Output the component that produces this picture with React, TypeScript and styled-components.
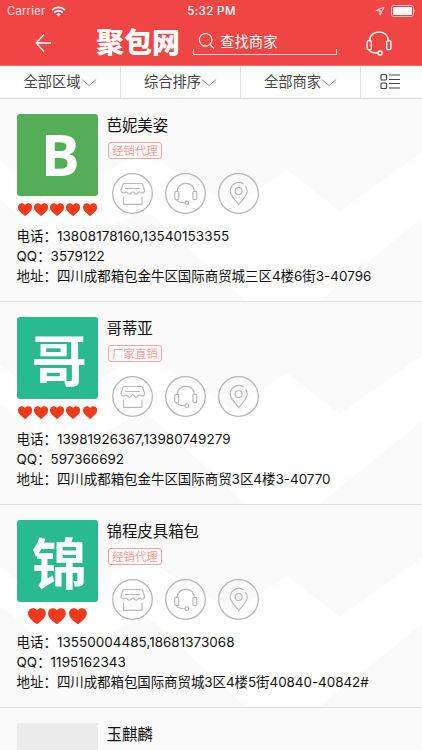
import React from "react";
import styled, { createGlobalStyle } from "styled-components";

const GlobalStyle = createGlobalStyle`
  * { box-sizing: border-box; }
  body {
    margin: 0;
    background: #fafafa;
    overflow: hidden;
    font-family: Inter, "Noto Sans CJK SC", sans-serif;
    color: #111;
  }
`;

const Screen = styled.div`
  width: 422px;
  height: 750px;
  overflow: hidden;
  display: flex;
  flex-direction: column;
`;

const Header = styled.header`
  height: 66px;
  flex: none;
  background: #f04545;
  color: #fff;
  border-bottom: 1px solid #f36c6c;
`;

const StatusBar = styled.div`
  height: 22px;
  display: grid;
  grid-template-columns: 1fr auto 1fr;
  align-items: center;
  padding: 0 6px 0 7px;
  font-size: 11.3px;
`;

const StatusSide = styled.div<{ $end?: boolean }>`
  display: flex;
  align-items: center;
  justify-content: ${(p) => (p.$end ? "flex-end" : "flex-start")};
  gap: 6px;
  color: #fde3e3;
  letter-spacing: 0.2px;
`;

const Clock = styled.div`
  font-weight: 500;
  font-size: 11.6px;
  letter-spacing: 0.35px;
`;

const NavBar = styled.div`
  height: 43px;
  display: flex;
  align-items: flex-start;
`;

const BackButton = styled.button`
  width: 96px;
  height: 43px;
  padding: 0 0 0 35px;
  border: 0;
  background: none;
  color: #fff;
  text-align: left;
  svg { display: block; }
`;

const Logo = styled.h1`
  margin: 0;
  width: 97px;
  font: 900 28px/39px "Noto Sans CJK SC", sans-serif;
`;

const SearchBox = styled.div`
  width: 144px;
  height: 25px;
  margin-top: 8px;
  display: flex;
  align-items: flex-start;
  gap: 5px;
  padding-left: 5px;
  font-size: 14.4px;
  line-height: 23px;
  background:
    linear-gradient(#ffdede, #ffdede) left bottom / 1px 6px no-repeat,
    linear-gradient(#ffdede, #ffdede) right bottom / 1px 6px no-repeat,
    linear-gradient(#ffdede, #ffdede) left bottom / 100% 1px no-repeat;
  svg { margin-top: 2px; }
`;

const SupportButton = styled.button`
  margin: 8px 0 0 28px;
  padding: 0;
  border: 0;
  background: none;
  color: #fff;
  svg { display: block; }
`;

const FilterBar = styled.nav`
  height: 33px;
  flex: none;
  display: grid;
  grid-template-columns: 121px 120px 120px 1fr;
  background: #fff;
  border-bottom: 1px solid #d5d5d5;
`;

const Filter = styled.button`
  display: flex;
  align-items: center;
  justify-content: center;
  padding: 0 0 2px;
  border: 0;
  border-right: 1px solid #e2e2e2;
  background: none;
  color: #444;
  font: 14.3px/20px "Noto Sans CJK SC", sans-serif;
  svg { margin-top: 2px; }
  &:last-child { border-right: 0; padding: 0 2px 3px 0; }
`;

const Card = styled.article`
  position: relative;
  isolation: isolate;
  height: 203px;
  flex: none;
  padding: 15.3px 17px 0 16.6px;
  border-bottom: 1px solid #dcdcdc;
  overflow: hidden;
`;

const Backdrop = styled.svg`
  position: absolute;
  inset: 0;
  z-index: -1;
`;

const Summary = styled.div`
  display: flex;
  height: 112px;
`;

const AvatarColumn = styled.div`
  width: 81.4px;
  flex: none;
`;

const Avatar = styled.div<{ $color: string; $latin?: boolean }>`
  height: 81.4px;
  border-radius: ${(p) => (p.$color === "#ebebeb" ? 0 : 3)}px;
  background: ${(p) => p.$color};
  color: #fff;
  display: flex;
  align-items: center;
  justify-content: center;
  padding: ${(p) => (p.$latin ? "0 0 3px 6px" : "0 0 1px 4px")};
  font: ${(p) =>
    p.$latin
      ? '700 58px/80px "Open Sans", sans-serif'
      : '700 55px/80px "Noto Sans CJK SC", sans-serif'};
`;

const Hearts = styled.div<{ $large: boolean }>`
  display: flex;
  justify-content: center;
  gap: ${(p) => (p.$large ? 2.6 : 2.1)}px;
  margin-top: ${(p) => (p.$large ? 6 : 7.5)}px;
  svg { display: block; }
`;

const Details = styled.div`
  padding-left: 8.6px;
`;

const Name = styled.h2`
  margin: -1px 0 0;
  font: 400 15.4px/22px "Noto Sans CJK SC", sans-serif;
  color: #111;
`;

const Tag = styled.span`
  display: block;
  width: 54px;
  height: 16.5px;
  margin: 7px 0 0 1.4px;
  border: 1px solid #f5a3a3;
  border-radius: 3px;
  color: #f5a0a0;
  font: 11.4px/14px "Noto Sans CJK SC", sans-serif;
  text-align: center;
`;

const Actions = styled.div`
  display: flex;
  gap: 12px;
  margin: 14.2px 0 0 5.8px;
`;

const RoundButton = styled.button`
  width: 41px;
  height: 41px;
  padding: 0;
  border: 0;
  background: none;
  color: #b8b8b8;
  svg { display: block; }
`;

const Contact = styled.dl`
  margin: 0;
  font-size: 13.45px;
  line-height: 20px;
  white-space: nowrap;
`;

const Row = styled.div`
  display: flex;
  dt, dd { margin: 0; }
`;

const Value = styled.dd<{ $spacing: number }>`
  letter-spacing: ${(p) => p.$spacing}px;
`;

function Wifi() {
  return (
    <svg width="15" height="11" viewBox="0 0 15 11" fill="none" stroke="#fff" strokeWidth="1.8">
      <path d="M1 4.1a9.3 9.3 0 0 1 13 0M3.3 6.5a6 6 0 0 1 8.4 0" />
      <path d="M5.2 8.2a3.4 3.4 0 0 1 4.6 0L7.5 10.6z" fill="#fff" stroke="none" />
    </svg>
  );
}

function Headset({ scale = 1, weight = 1.1 }: { scale?: number; weight?: number }) {
  return (
    <g
      transform={`scale(${scale})`}
      fill="none"
      stroke="currentColor"
      strokeWidth={weight / scale}
      strokeLinecap="round"
      strokeLinejoin="round"
    >
      <path d="M-8.8-2C-8.8-7.2-5-10.4 0-10.4S8.8-7.2 8.8-2" />
      <rect x="-11.2" y="-2.2" width="4" height="8.4" rx="1.3" />
      <rect x="7.2" y="-2.2" width="4" height="8.4" rx="1.3" />
      <path d="M-9.2 6.2C-9 8.7-6 9.4-1 9.4" />
      <circle cx="1" cy="9.4" r="1.9" />
    </g>
  );
}

type ActionKind = "shop" | "support" | "location";

function ActionIcon({ kind }: { kind: ActionKind }) {
  return (
    <svg width="41" height="41" viewBox="0 0 41 41" fill="none" stroke="currentColor" strokeWidth="1.15">
      <circle cx="20.5" cy="20.5" r="19.8" strokeWidth="1.3" />
      {kind === "shop" && (
        <g strokeLinecap="round" strokeLinejoin="round">
          <path d="M12 10.5h17.3q1 0 1.4 1l1.7 5.3c.5 1.8-.5 3.2-2.1 3.2-1.5 0-2-1-3-1-1.3 0-1.7 2.2-3.2 2.2s-1.9-2.2-3.4-2.2-1.9 2.2-3.4 2.2S15.4 19 14.1 19c-1 0-1.5 1-2.9 1-1.7 0-2.6-1.5-2-3.2l1.6-5.3q.4-1 1.2-1z" />
          <path d="M13.5 15.5h14M11.5 24v7.3H30V24" />
        </g>
      )}
      {kind === "support" && (
        <g transform="translate(20.8 20.5)">
          <Headset scale={0.98} weight={1.15} />
        </g>
      )}
      {kind === "location" && (
        <g strokeLinecap="round" strokeLinejoin="round">
          <path d="M25.2 10.7a8.6 8.6 0 0 0-13 7.6c0 4.2 5 8.7 8.6 13.4 3.5-4.700 8.400-9.200 8.400-13.400 0-1.900-.5-3.500-1.500-4.900" />
          <circle cx="20.6" cy="18" r="3.5" />
        </g>
      )}
    </svg>
  );
}

function Heart({ size }: { size: number }) {
  return (
    <svg width={size} height={size * 0.93} viewBox="0 0 28 26" fill="#ef3a1c">
      <path d="M14 3.6C11.7.7 8.9 0 6.9.4 3 .9 0 4 0 8.2c0 5.6 4.1 9.2 8 12.5 2.2 1.9 4.4 3.4 6 5.3 1.6-1.9 3.8-3.4 6-5.3 3.9-3.3 8-6.9 8-12.5C28 4 25 .9 21.1.4 19.1 0 16.3.7 14 3.6z" />
    </svg>
  );
}

const Chevron = () => (
  <svg width="16" height="9" viewBox="0 0 16 9" fill="none" stroke="#888" strokeWidth="0.9">
    <path d="M.8 1.5 8 7.6l7.2-6.1" />
  </svg>
);

interface Merchant {
  name: string;
  tag: string;
  initial: string;
  color: string;
  hearts: number;
  contact: { label: string; value: string; spacing: number }[];
}

const merchants: Merchant[] = [
  {
    name: "芭妮美姿",
    tag: "经销代理",
    initial: "B",
    color: "#54ad57",
    hearts: 5,
    contact: [
      { label: "电话：", value: "13808178160,13540153355", spacing: 0.08 },
      { label: "QQ：", value: "3579122", spacing: 0 },
      { label: "地址：", value: "四川成都箱包金牛区国际商贸城三区4楼6街3-40796", spacing: 0 },
    ],
  },
  {
    name: "哥蒂亚",
    tag: "厂家直销",
    initial: "哥",
    color: "#2aba90",
    hearts: 5,
    contact: [
      { label: "电话：", value: "13981926367,13980749279", spacing: 0.05 },
      { label: "QQ：", value: "597366692", spacing: 0 },
      { label: "地址：", value: "四川成都箱包金牛区国际商贸3区4楼3-40770", spacing: 0 },
    ],
  },
  {
    name: "锦程皮具箱包",
    tag: "经销代理",
    initial: "锦",
    color: "#2aba90",
    hearts: 3,
    contact: [
      { label: "电话：", value: "13550004485,18681373068", spacing: 0.04 },
      { label: "QQ：", value: "1195162343", spacing: 0.06 },
      { label: "地址：", value: "四川成都箱包国际商贸城3区4楼5街40840-40842#", spacing: -0.04 },
    ],
  },
];

const actions: ActionKind[] = ["shop", "support", "location"];

function MerchantCard({ merchant }: { merchant: Merchant }) {
  const large = merchant.hearts < 5;
  return (
    <Card>
      <Backdrop width="422" height="203" viewBox="0 0 422 203">
        <path
          fill="#fff"
          d="M0 62 56 107 122 63Q140 52 158 62L233 107 287 71 340 112 422 53V119L318 203H247L156 119Q145 109 134 116L62 151 0 101Z"
        />
      </Backdrop>
      <Summary>
        <AvatarColumn>
          <Avatar $color={merchant.color} $latin={merchant.initial === "B"}>
            {merchant.initial}
          </Avatar>
          <Hearts $large={large}>
            {Array.from({ length: merchant.hearts }, (_, i) => (
              <Heart key={i} size={large ? 17.8 : 14.2} />
            ))}
          </Hearts>
        </AvatarColumn>
        <Details>
          <Name>{merchant.name}</Name>
          <Tag>{merchant.tag}</Tag>
          <Actions>
            {actions.map((kind) => (
              <RoundButton key={kind} aria-label={kind}>
                <ActionIcon kind={kind} />
              </RoundButton>
            ))}
          </Actions>
        </Details>
      </Summary>
      <Contact>
        {merchant.contact.map((c) => (
          <Row key={c.label}>
            <dt>{c.label}</dt>
            <Value $spacing={c.spacing}>{c.value}</Value>
          </Row>
        ))}
      </Contact>
    </Card>
  );
}

export default function App() {
  return (
    <Screen>
      <GlobalStyle />
      <Header>
        <StatusBar>
          <StatusSide>
            Carrier
            <Wifi />
          </StatusSide>
          <Clock>5:32 PM</Clock>
          <StatusSide $end>
            <svg width="10" height="10" viewBox="0 0 10 10" fill="none" stroke="#fff" strokeWidth="0.9">
              <path d="M9 1 .9 4.7h4.200V9z" />
            </svg>
            <svg width="25" height="12" viewBox="0 0 25 12">
              <rect x=".5" y=".5" width="22" height="11" rx="2" fill="none" stroke="#fbb" />
              <rect x="2" y="2" width="19" height="8" rx=".6" fill="#fff" />
              <path d="M23.5 4q1.500 2 0 4z" fill="#fbb" />
            </svg>
          </StatusSide>
        </StatusBar>
        <NavBar>
          <BackButton aria-label="back">
            <svg width="17" height="43" viewBox="0 0 17 43" fill="none" stroke="#fff" strokeWidth="1.4">
              <path d="M16 21H1.200M9 12.500 1.200 21 9 29.500" />
            </svg>
          </BackButton>
          <Logo>聚包网</Logo>
          <SearchBox>
            <svg width="17" height="18" viewBox="0 0 17 18" fill="none" stroke="#fff" strokeWidth="1.1">
              <circle cx="7.6" cy="7.8" r="6.3" />
              <path d="m12 12.500 4 4" />
            </svg>
            查找商家
          </SearchBox>
          <SupportButton aria-label="support">
            <svg width="28" height="26" viewBox="-14 -13 28 26">
              <Headset scale={1.06} weight={1.35} />
            </svg>
          </SupportButton>
        </NavBar>
      </Header>
      <FilterBar>
        <Filter>全部区域<Chevron /></Filter>
        <Filter>综合排序<Chevron /></Filter>
        <Filter>全部商家<Chevron /></Filter>
        <Filter aria-label="view">
          <svg width="21" height="17" viewBox="0 0 21 17" fill="none" stroke="#444" strokeWidth="1.2">
            <rect x="1" y="1.5" width="5.5" height="5.5" rx="1" />
            <rect x="1" y="10" width="5.5" height="5.5" rx="1" />
            <path d="M9 2h11M9 6.500h11M9 10.500h11M9 15h11" />
          </svg>
        </Filter>
      </FilterBar>
      {merchants.map((m) => (
        <MerchantCard key={m.name} merchant={m} />
      ))}
      <Card>
        <Summary>
          <AvatarColumn>
            <Avatar $color="#ebebeb" />
          </AvatarColumn>
          <Details>
            <Name>玉麒麟</Name>
          </Details>
        </Summary>
      </Card>
    </Screen>
  );
}
